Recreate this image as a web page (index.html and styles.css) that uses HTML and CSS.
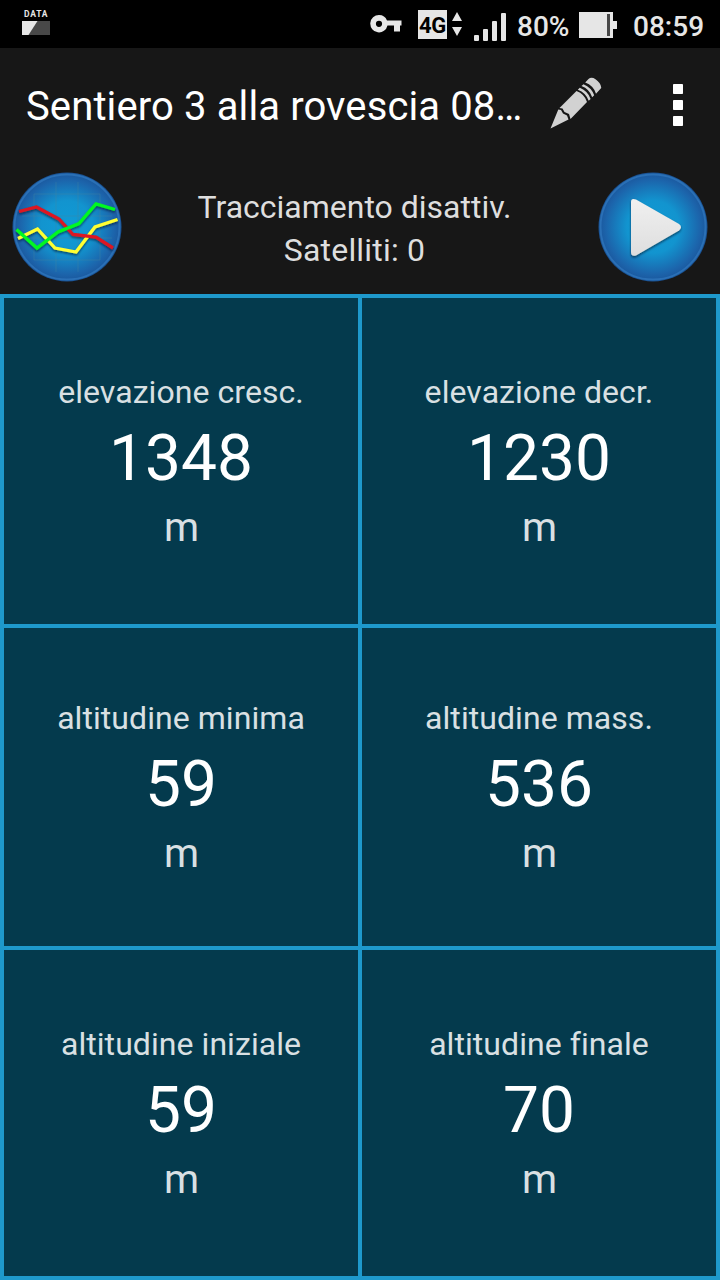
FILE: index.html
```html
<!DOCTYPE html>
<html lang="it">
<head>
<meta charset="utf-8">
<title>Sentiero 3 alla rovescia</title>
<link rel="stylesheet" href="styles.css">
</head>
<body>
<div class="screen">
  <div class="status-bar">
    <div class="data-icon">
      <span class="data-label">DATA</span>
      <svg width="28" height="14" viewBox="0 0 28 14"><path fill="#484848" d="M0 0h28v14H0z"/><path fill="#e6e6e6" d="M0 0h15.500L6.500 14H0z"/></svg>
    </div>
    <svg class="key-icon" width="32" height="20" viewBox="0 0 32 20"><path fill="#e6e6e6" fill-rule="evenodd" d="M9 1a8.700 8.700 0 0 1 8 5.500h14.500v5H30v6h-6v-6h-6.500A8.700 8.700 0 1 1 9 1zM9 6.700a3.100 3.100 0 1 0 0 6.200 3.100 3.100 0 0 0 0-6.200z"/></svg>
    <span class="network">4G</span>
    <svg class="arrows-icon" width="10" height="26" viewBox="0 0 10 26"><path fill="#e6e6e6" d="M5 1l5 9H0zM5 25l5-9H0z"/></svg>
    <svg class="signal-icon" width="32" height="28" viewBox="0 0 32 28" fill="#e6e6e6"><rect y="22" width="5" height="6" rx="1"/><rect x="9" y="16" width="5" height="12" rx="1"/><rect x="18" y="8" width="5" height="20" rx="1"/><rect x="27" width="5" height="28" rx="1"/></svg>
    <span class="battery-text">80%</span>
    <svg class="battery-icon" width="38" height="26" viewBox="0 0 38 26"><path fill="#e6e6e6" d="M0 0h34v9h4v8h-4v9H0z"/><path fill="#484848" d="M28 2h3v22h-3z"/></svg>
    <span class="clock">08:59</span>
  </div>

  <div class="title-bar">
    <div class="title">Sentiero 3 alla rovescia 08…</div>
    <svg class="pencil-icon" width="52" height="52" viewBox="0 0 52 52">
      <g fill="#d2d2d2">
        <path d="M0.500 51.500L8.300 32.500L11 33L13 36.500L17 38.500L18.500 42.500z"/>
        <path d="M9.500 31L26.500 14Q34.500 17 37 25L20.500 42L19 37L14.500 35L12.500 31.500z"/>
        <path d="M27.800 12.700L29.800 10.800Q38 14.200 40.600 22L38.700 23.800Q36 15.800 27.800 12.700z"/>
        <path d="M31.500 9.100L33.500 7.200Q41.500 10.500 44.200 18.300L42.200 20.300Q39.500 12.200 31.500 9.100z"/>
        <path d="M35.200 5.500L38.500 2Q41.500-.500 45.500 2.200Q51.500 6.500 51.200 11L46 16.700Q43.500 8.600 35.200 5.500z"/>
      </g>
    </svg>
    <svg class="menu-icon" width="10" height="42" viewBox="0 0 10 42" fill="#fff"><rect width="10" height="10" rx=".8"/><rect y="16" width="10" height="10" rx=".8"/><rect y="32" width="10" height="10" rx=".8"/></svg>
  </div>

  <div class="tracking-bar">
    <svg class="round-button" width="110" height="110" viewBox="0 0 110 110">
      <defs>
        <radialGradient id="disc"><stop offset="0" stop-color="#109bd5"/><stop offset=".5" stop-color="#1294cf"/><stop offset=".9" stop-color="#1c64ab"/><stop offset="1" stop-color="#1b5aa0"/></radialGradient>
        <filter id="shadow" x="-20%" y="-20%" width="140%" height="140%"><feDropShadow dx="0" dy="1.500" stdDeviation="1" flood-color="#012" flood-opacity=".65"/></filter>
      </defs>
      <circle cx="55" cy="55" r="54.500" fill="#1a5395"/>
      <circle cx="55" cy="55" r="52.500" fill="url(#disc)" stroke="#2a70b6" stroke-width="2"/>
      <path d="M44 10v90M66 10v90M22 22v66M88 22v66M22 22h66M10 44h90M10 66h90M22 88h66" fill="none" stroke="#4687a0" stroke-opacity=".38"/>
      <g fill="none" stroke-width="3.300" filter="url(#shadow)">
        <path stroke="#ffff32" d="M6 66.500L25.500 57L43 76L64 80L83 55L105.500 47.500"/>
        <path stroke="#dc1720" d="M7 39.500L24.500 35L47 47L61 62.500L84 65L101 76"/>
        <path stroke="#00f820" d="M4.500 57.500L25 76L46 60L67 51.500L84 32L103 37.500"/>
      </g>
    </svg>
    <div class="tracking-text">
      <div>Tracciamento disattiv.</div>
      <div class="satellites">Satelliti: 0</div>
    </div>
    <svg class="round-button" width="110" height="110" viewBox="0 0 110 110">
      <defs><linearGradient id="play" x1="0" y1="0" x2="0" y2="1"><stop offset="0" stop-color="#f0f0f0"/><stop offset="1" stop-color="#dedede"/></linearGradient></defs>
      <circle cx="55" cy="55" r="54.500" fill="#1a5395"/>
      <circle cx="55" cy="55" r="52.500" fill="url(#disc)" stroke="#2a70b6" stroke-width="2"/>
      <path filter="url(#shadow)" fill="url(#play)" d="M33 30Q33 25.500 38 27.500L81 52Q85 55 81 58.500L38 83.500Q33 85 33 80z"/>
    </svg>
  </div>

  <div class="stats">
    <div class="stat"><div class="label">elevazione cresc.</div><div class="value">1348</div><div class="unit">m</div></div>
    <div class="stat"><div class="label">elevazione decr.</div><div class="value">1230</div><div class="unit">m</div></div>
    <div class="stat"><div class="label">altitudine minima</div><div class="value">59</div><div class="unit">m</div></div>
    <div class="stat"><div class="label">altitudine mass.</div><div class="value">536</div><div class="unit">m</div></div>
    <div class="stat"><div class="label">altitudine iniziale</div><div class="value">59</div><div class="unit">m</div></div>
    <div class="stat"><div class="label">altitudine finale</div><div class="value">70</div><div class="unit">m</div></div>
  </div>
</div>
</body>
</html>
```
FILE: styles.css
```css
* {
  box-sizing: border-box;
}

body {
  margin: 0;
  background: #171717;
  font-family: Roboto, "Noto Sans", sans-serif;
}

svg {
  display: block;
  flex: none;
}

.screen {
  width: 720px;
  height: 1280px;
  display: flex;
  flex-direction: column;
  overflow: hidden;
}

.status-bar {
  height: 48px;
  display: flex;
  align-items: flex-start;
  padding-left: 22px;
  background: #000;
  color: #e6e6e6;
  font-size: 28px;
  line-height: 32px;
}

.data-icon {
  width: 28px;
  margin: 9px 320px 0 0;
}

.data-label {
  display: block;
  height: 12px;
  padding-left: 2px;
  font-size: 8.500px;
  font-weight: 700;
  line-height: 10px;
  letter-spacing: 0.8px;
}

.key-icon {
  margin-top: 14px;
}

.network {
  width: 29px;
  height: 29px;
  margin: 10px 0 0 16px;
  background: #e6e6e6;
  color: #000;
  font-size: 22px;
  font-weight: 700;
  line-height: 31px;
  text-align: center;
  letter-spacing: -0.3px;
}

.arrows-icon {
  margin: 11px 0 0 5px;
}

.signal-icon {
  margin: 13px 0 0 12px;
}

.battery-text {
  width: 52px;
  margin: 11px 0 0 11px;
}

.battery-icon {
  margin: 12px 0 0 10px;
}

.clock {
  margin: 11px 0 0 16px;
}

.battery-text,
.clock {
  font-weight: 500;
}

.title-bar {
  height: 112px;
  display: flex;
  align-items: flex-start;
  padding-left: 26px;
  background: #171717;
}

.title {
  width: 524px;
  margin-top: 35px;
  color: #fff;
  font-size: 40px;
  line-height: 48px;
  letter-spacing: 0.12px;
  white-space: nowrap;
}

.pencil-icon {
  margin-top: 29px;
}

.menu-icon {
  margin: 36px 0 0 71px;
}

.tracking-bar {
  height: 134px;
  display: flex;
  justify-content: space-between;
  padding: 12px 12px 0;
}

.tracking-text {
  flex: 1;
  padding: 14px 11px 0 0;
  color: #dedede;
  font-size: 32px;
  line-height: 43px;
  text-align: center;
}

.satellites {
  letter-spacing: 0.2px;
}

.stats {
  flex: 1;
  display: grid;
  grid-template-columns: 354px 354px;
  grid-template-rows: 326px 318px 326px;
  gap: 4px;
  padding: 4px;
  background: #1e99cc;
}

.stat {
  display: flex;
  flex-direction: column;
  align-items: center;
  justify-content: center;
  padding-top: 2px;
  background: #043a4d;
  color: #d9e0e3;
}

.label {
  font-size: 32px;
  line-height: 38px;
  letter-spacing: 0.06px;
}

.value {
  margin: 10px 0 8px;
  color: #fff;
  font-size: 64px;
  line-height: 76px;
}

.unit {
  padding-left: 1px;
  font-size: 40px;
  line-height: 46px;
}
```
